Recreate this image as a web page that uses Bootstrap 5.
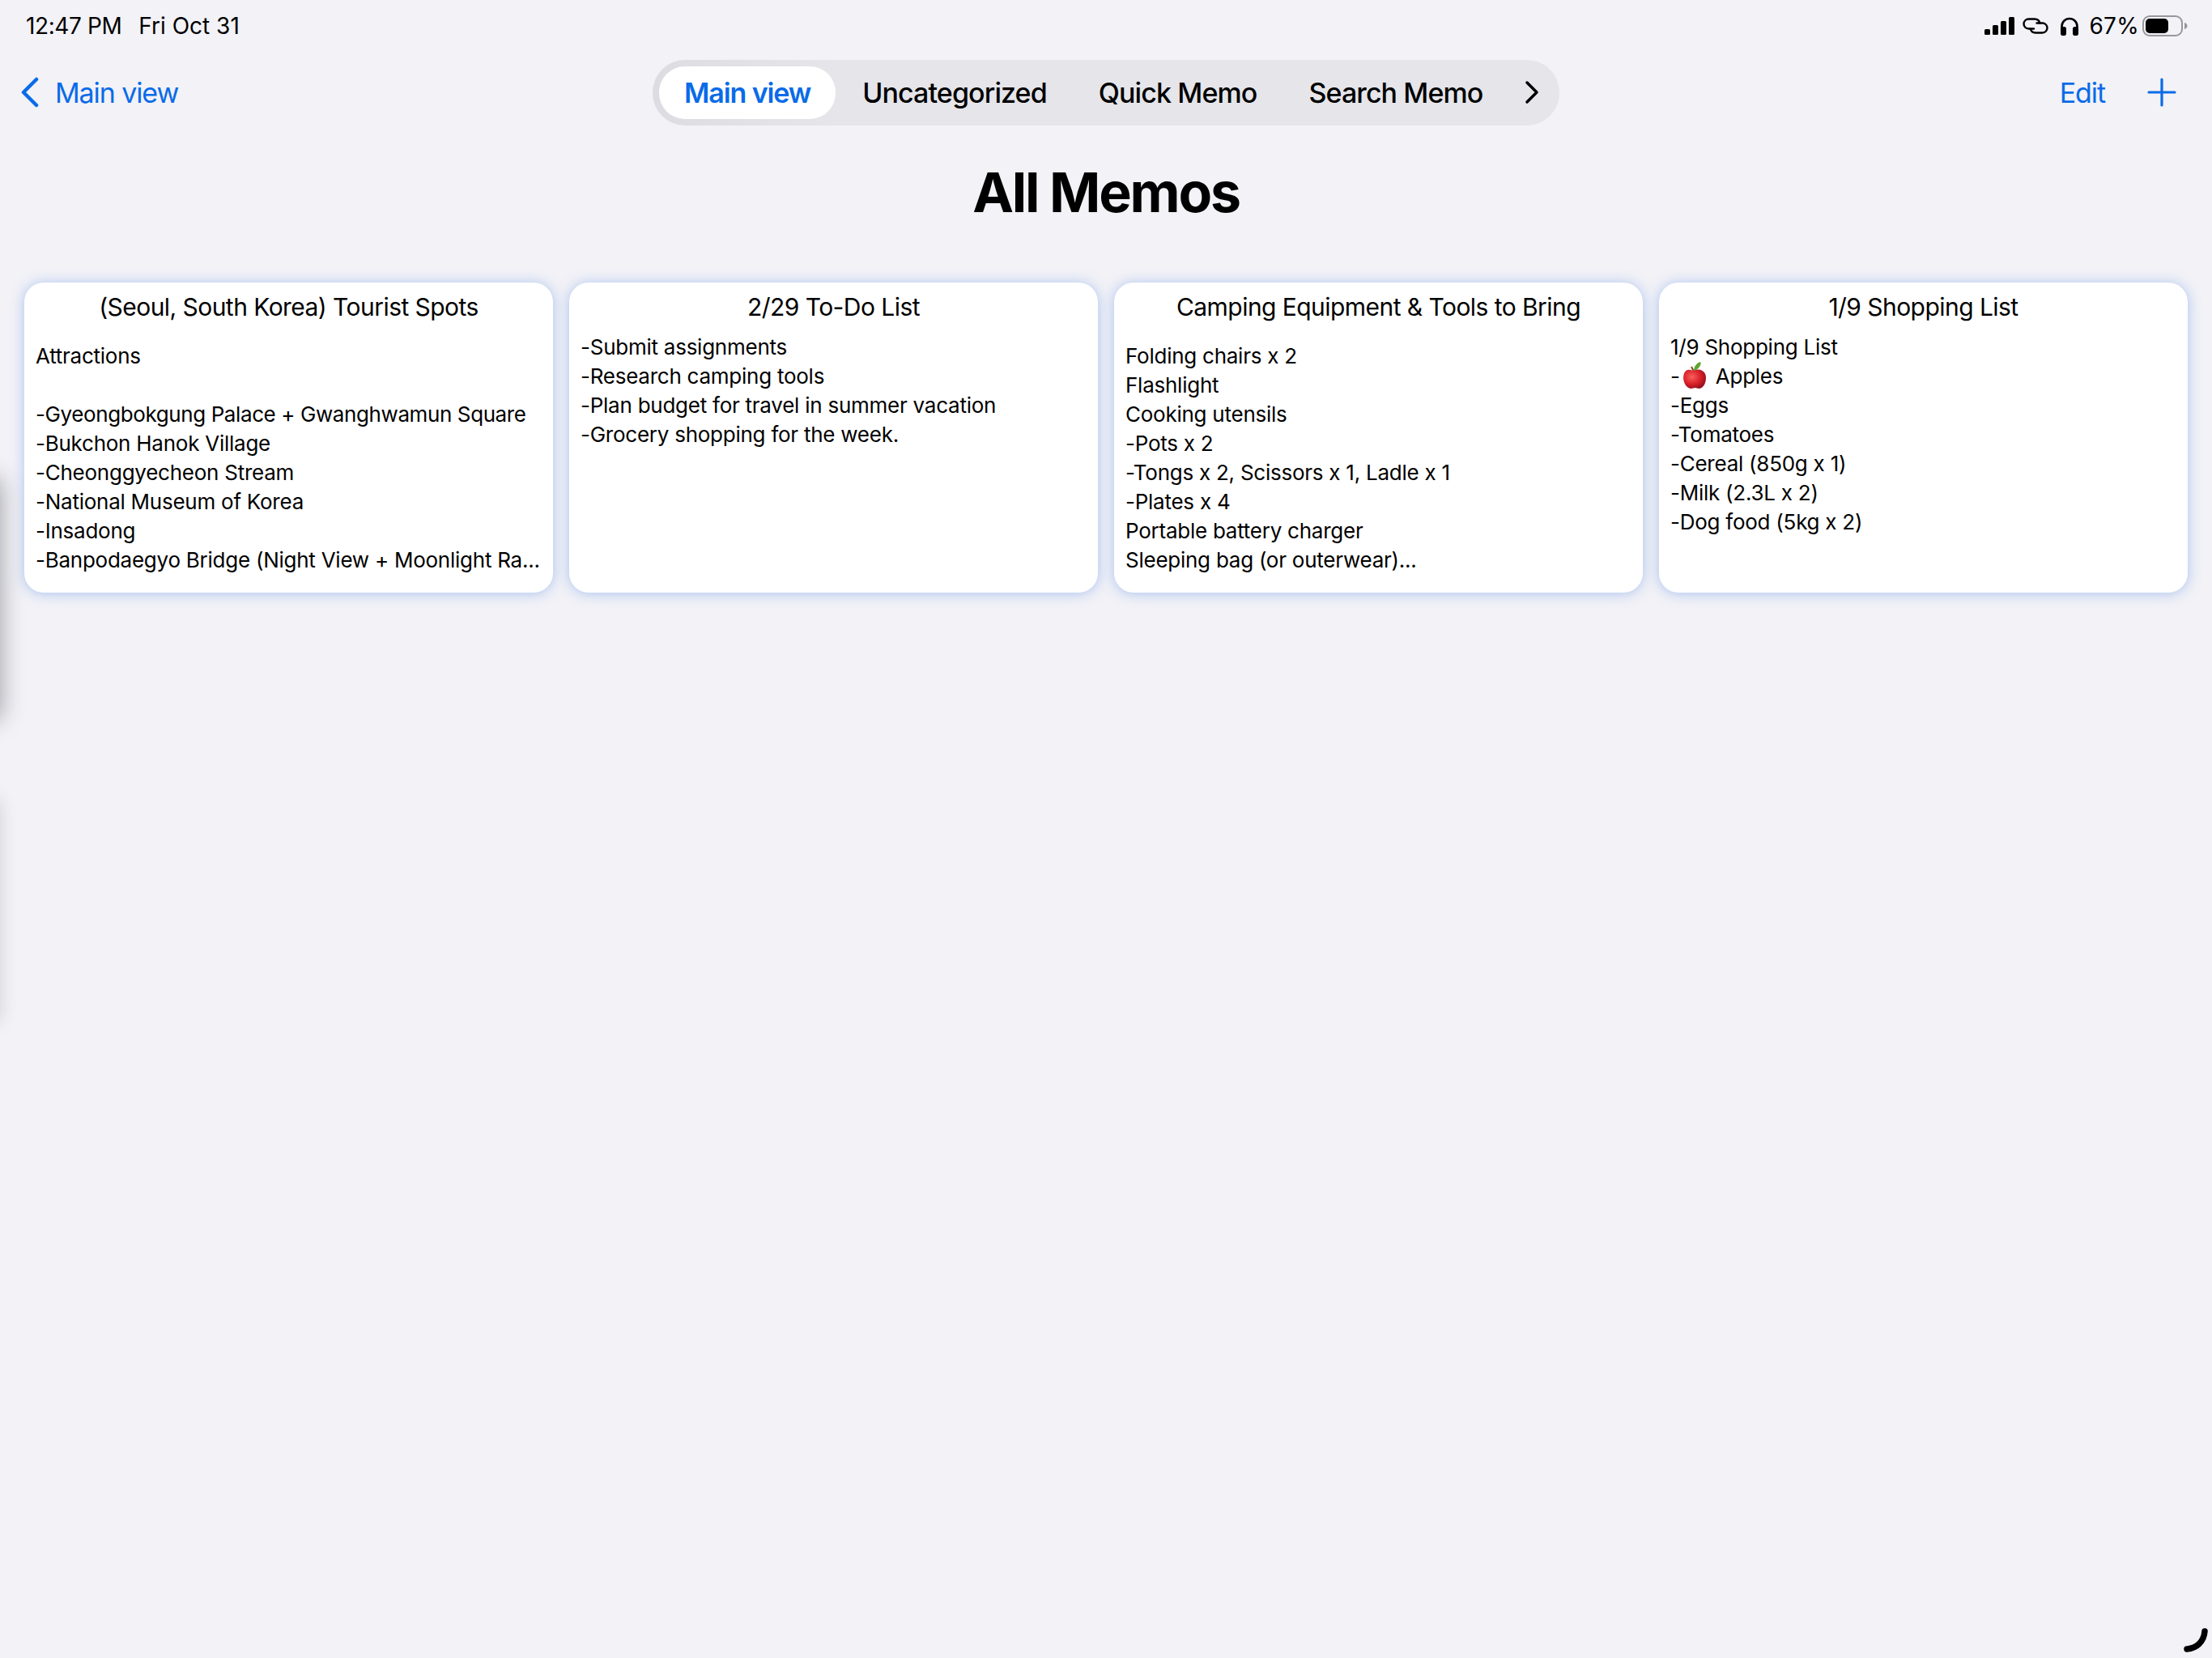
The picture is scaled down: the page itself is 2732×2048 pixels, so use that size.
<!DOCTYPE html>
<html lang="en">
<head>
  <meta charset="UTF-8" />
  <title>All Memos</title>
  <link href="https://cdn.jsdelivr.net/npm/bootstrap@5.3.1/dist/css/bootstrap.min.css" rel="stylesheet">
  <style>
    body {
      background-color: #f2f2f7;
      color: #000;
      font-family: Inter, "Noto Sans", sans-serif;
      height: 2048px;
      overflow: hidden;
    }

    /* status bar */
    .status-row { height: 64px; padding: 0 30px 0 32px; font-size: 28px; }
    .status-row svg { display: block; }
    .status-time { letter-spacing: -.4px; }
    .status-date { margin-left: 21px; }
    .status-icons { gap: 10px; }
    .status-level { margin: 0 -6px 0 2px; letter-spacing: .3px; }

    /* nav row */
    .top-row { display: grid; grid-template-columns: 1fr auto 1fr; height: 82px; margin-top: 9px; padding: 0 27px; }
    .blue-text { color: #0a6be8; font-size: 34px; letter-spacing: -1.1px; text-decoration: none; }
    .back-link { margin-left: -2px; }
    .back-label { margin-left: 19px; }
    .add-icon { margin: 0 17px 0 52px; }
    .memo-pill { height: 81px; width: 1120px; padding: 8px; background: linear-gradient(90deg, #dcdce2, #e5e5ea 20%); border-radius: 40px; gap: 2px; flex-wrap: nowrap; }
    .memo-pill .nav-link { height: 65px; padding: 0 31px; color: #000; font-size: 34px; font-weight: 500; letter-spacing: -.9px; border-radius: 32px; line-height: 65px; white-space: nowrap; }
    .memo-pill .nav-link.active { background: #fff; color: #0a6be8; font-weight: 600; letter-spacing: -1.1px; }
    .more-item { margin-left: 19px; }

    .page-title { font-size: 68px; font-weight: 700; letter-spacing: -2.2px; line-height: 82px; margin: 41px 0 0; }

    /* memo cards */
    .memo-grid { padding: 0 30px; margin-top: 71px; }
    .memo-grid .row { --bs-gutter-x: 20px; }
    .memo-card { height: 383px; border: 0; border-radius: 24px; box-shadow: 0 1px 16px rgba(110, 155, 230, .55); padding: 12px 14px 0; }
    .memo-head { font-size: 30px; line-height: 36px; text-align: center; letter-spacing: -.55px; margin-bottom: 14px; }
    .memo-text { font-size: 26px; line-height: 36px; letter-spacing: -.25px; white-space: nowrap; }
    .memo-text.pushed { padding-top: 11px; }
    .tight-line { letter-spacing: -.4px; }
    .apple-icon { vertical-align: -7px; margin: -6px -1px 0 2px; }

    /* things lying on top of the page */
    .edge-shade { position: absolute; left: -30px; width: 30px; border-radius: 20px; }
    .edge-a { top: 590px; height: 300px; box-shadow: 0 0 28px 2px rgba(40, 40, 50, .38); }
    .edge-b { top: 985px; height: 280px; box-shadow: 0 0 22px rgba(40, 40, 50, .16); }
    .home-corner { position: absolute; right: 0; bottom: 0; }
  </style>
</head>
<body>
  <div class="edge-shade edge-a"></div>
  <div class="edge-shade edge-b"></div>

  <div class="status-row d-flex align-items-center justify-content-between">
    <div><span class="status-time">12:47 PM</span><span class="status-date">Fri Oct 31</span></div>
    <div class="status-icons d-flex align-items-center">
      <svg width="37" height="22" viewBox="0 0 37 22"><rect x="0" y="15" width="7" height="7" rx="1.500"/><rect x="10" y="10" width="7" height="12" rx="1.500"/><rect x="20" y="5" width="7" height="17" rx="1.500"/><rect x="30" y="0" width="7" height="22" rx="1.500"/></svg>
      <svg width="32" height="20" viewBox="0 0 32 20" fill="none" stroke="#000" stroke-width="2.400" stroke-linecap="round"><path d="M14 13.500H7.500a6 6 0 0 1 0-12H15a6.500 6.500 0 0 1 6.300 5"/><path d="M17.500 6.500H24.500a6 6 0 0 1 0 12H16a6.500 6.500 0 0 1-6.300-5"/></svg>
      <svg class="ms-1" width="24" height="23" viewBox="0 0 24 23"><path d="M2.500 16v-4.500a9.500 9.500 0 0 1 19 0V16" fill="none" stroke="#000" stroke-width="2.600"/><rect x="1" y="12" width="7" height="11" rx="2.800"/><rect x="16" y="12" width="7" height="11" rx="2.800"/></svg>
      <span class="status-level">67%</span>
      <svg width="56" height="26" viewBox="0 0 56 26"><rect x="1" y="1" width="48" height="24" rx="8" fill="none" stroke="#98989c" stroke-width="2"/><rect x="4" y="4" width="28" height="18" rx="5"/><path d="M52 9c2 .5 3.500 2 3.500 4s-1.500 3.500-3.500 4z" fill="#98989c"/></svg>
    </div>
  </div>

  <div class="top-row align-items-center">
    <a class="blue-text back-link d-flex align-items-center" href="#">
      <svg width="24" height="38" viewBox="0 0 24 38" fill="none" stroke="#0a6be8" stroke-width="4.500" stroke-linecap="round" stroke-linejoin="round"><path d="M20 3 4 19l16 16"/></svg>
      <span class="back-label">Main view</span>
    </a>
    <ul class="nav nav-pills memo-pill align-items-center">
      <li class="nav-item"><a class="nav-link active" href="#">Main view</a></li>
      <li class="nav-item"><a class="nav-link" href="#">Uncategorized</a></li>
      <li class="nav-item"><a class="nav-link" href="#">Quick Memo</a></li>
      <li class="nav-item"><a class="nav-link" href="#">Search Memo</a></li>
      <li class="nav-item more-item">
        <svg class="d-block" width="18" height="30" viewBox="0 0 18 30" fill="none" stroke="#000" stroke-width="3.500" stroke-linecap="round" stroke-linejoin="round"><path d="M3 3l12 12L3 27"/></svg>
      </li>
    </ul>
    <div class="d-flex align-items-center justify-content-end">
      <a class="blue-text" href="#">Edit</a>
      <svg class="add-icon" width="36" height="36" viewBox="0 0 36 36" stroke="#0a6be8" stroke-width="3.200" stroke-linecap="round"><path d="M18 2v32M2 18h32"/></svg>
    </div>
  </div>

  <h1 class="page-title text-center">All Memos</h1>

  <div class="memo-grid">
    <div class="row row-cols-4">
      <div class="col">
        <div class="card memo-card">
          <div class="memo-head">(Seoul, South Korea) Tourist Spots</div>
          <div class="memo-text pushed">Attractions<br><br><span class="tight-line">-Gyeongbokgung Palace + Gwanghwamun Square</span><br>-Bukchon Hanok Village<br>-Cheonggyecheon Stream<br>-National Museum of Korea<br>-Insadong<br>-Banpodaegyo Bridge (Night View + Moonlight Ra...</div>
        </div>
      </div>
      <div class="col">
        <div class="card memo-card">
          <div class="memo-head">2/29 To-Do List</div>
          <div class="memo-text">-Submit assignments<br>-Research camping tools<br>-Plan budget for travel in summer vacation<br>-Grocery shopping for the week.</div>
        </div>
      </div>
      <div class="col">
        <div class="card memo-card">
          <div class="memo-head">Camping Equipment &amp; Tools to Bring</div>
          <div class="memo-text pushed">Folding chairs x 2<br>Flashlight<br>Cooking utensils<br>-Pots x 2<br>-Tongs x 2, Scissors x 1, Ladle x 1<br>-Plates x 4<br>Portable battery charger<br>Sleeping bag (or outerwear)...</div>
        </div>
      </div>
      <div class="col">
        <div class="card memo-card">
          <div class="memo-head">1/9 Shopping List</div>
          <div class="memo-text">1/9 Shopping List<br>-<svg class="apple-icon" width="36" height="34" viewBox="0 0 36 34"><defs><radialGradient id="appleRed" cx=".38" cy=".38" r=".7"><stop offset="0" stop-color="#f8605a"/><stop offset=".55" stop-color="#d9202a"/><stop offset="1" stop-color="#8e0f18"/></radialGradient></defs><path d="M12 6l3 6" stroke="#7a4a2a" stroke-width="2" fill="none"/><path d="M14 11c4-2 13-3 16 5 2 7-2 17-8 17-2 0-3-1-5-1s-3 1-5 1c-6 0-11-10-9-17 2-7 7-7 11-5z" fill="url(#appleRed)" transform="translate(-.5 0)"/><path d="M15 11c0-5 3-9 8-11 2 2-1 9-8 11z" fill="#5da52a"/></svg> Apples<br>-Eggs<br>-Tomatoes<br>-Cereal (850g x 1)<br>-Milk (2.3L x 2)<br>-Dog food (5kg x 2)</div>
        </div>
      </div>
    </div>
  </div>

  <svg class="home-corner" width="60" height="60" viewBox="0 0 60 60" fill="none" stroke="#000" stroke-width="7.500" stroke-linecap="round"><path d="M29 49c12-1 21-9 22-22"/></svg>

  <script src="https://cdn.jsdelivr.net/npm/bootstrap@5.3.1/dist/js/bootstrap.bundle.min.js"></script>
</body>
</html>
